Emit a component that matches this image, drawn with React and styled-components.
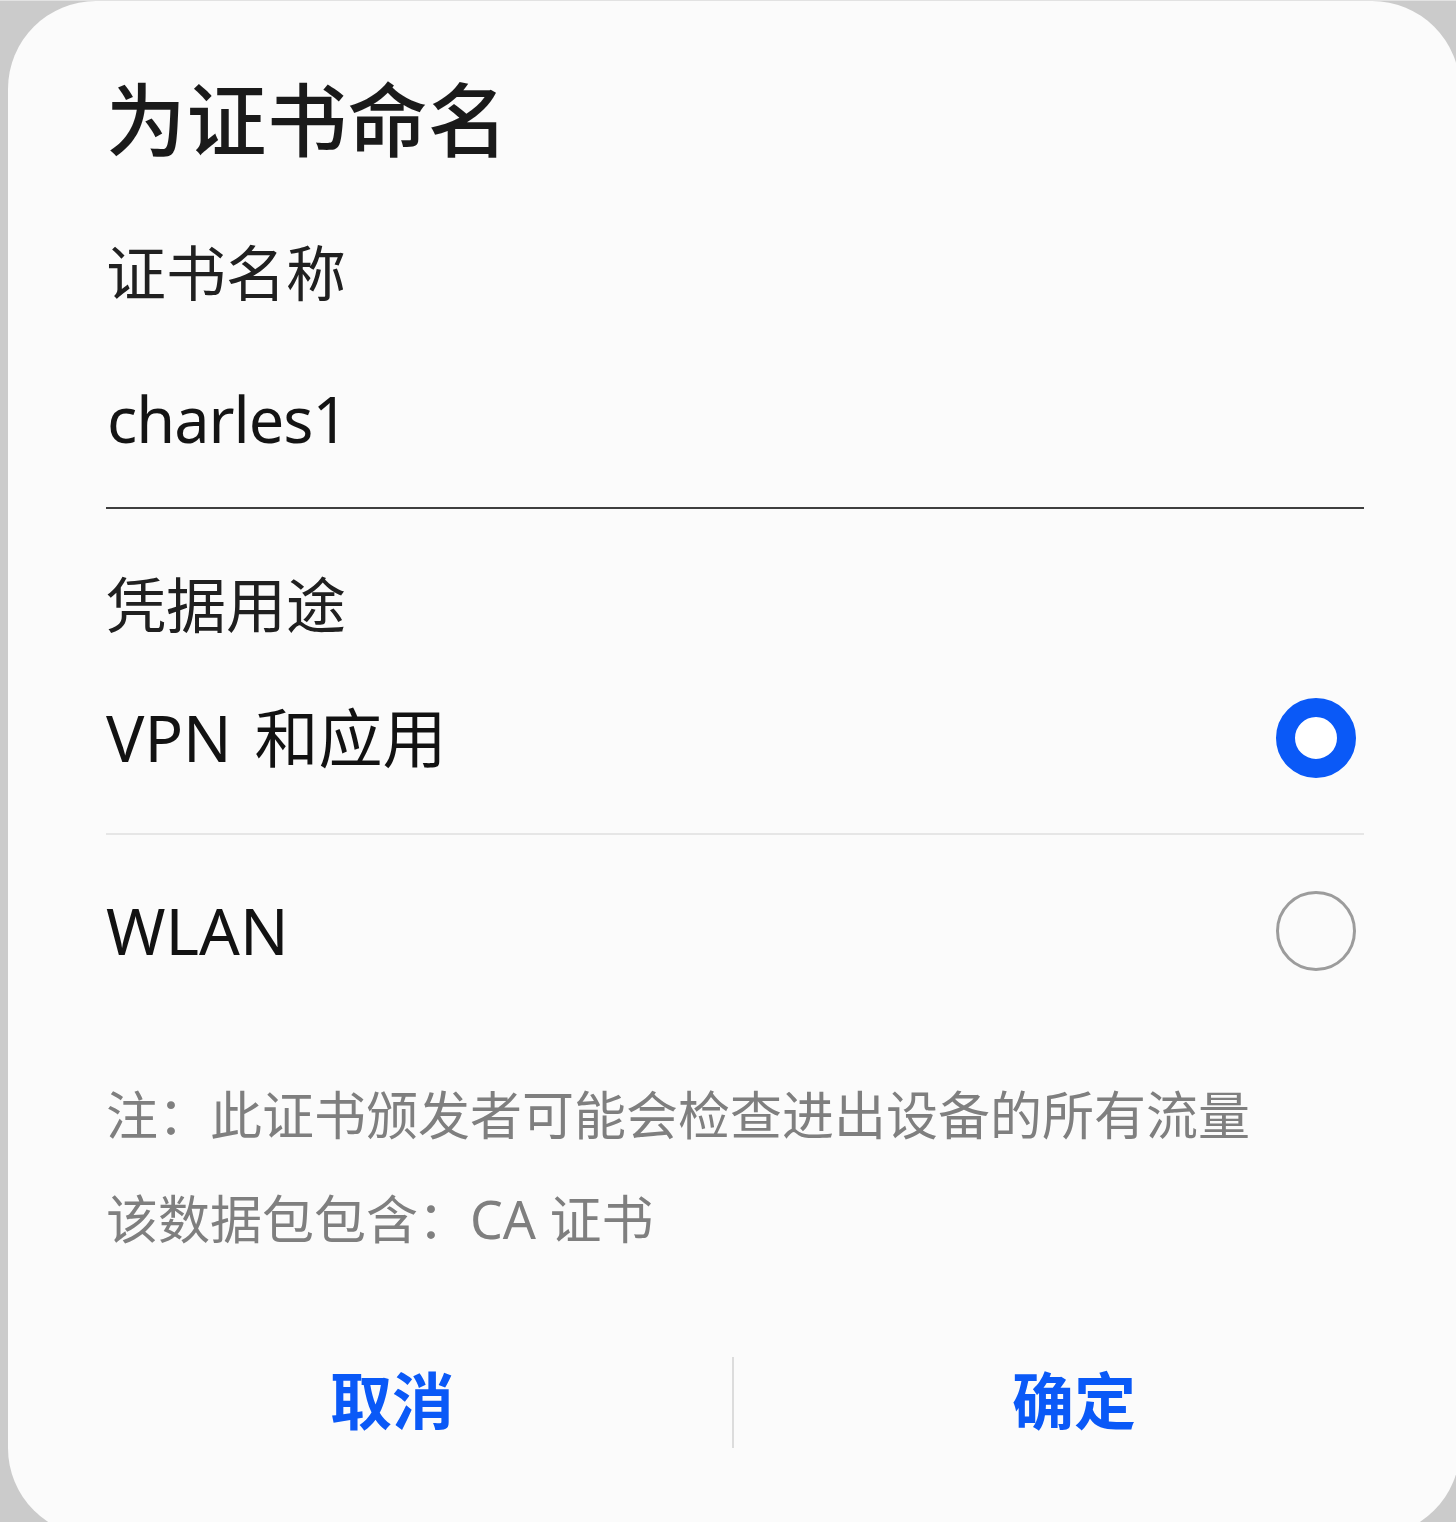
import styled, { createGlobalStyle } from "styled-components";

const GlobalStyle = createGlobalStyle`
  html, body {
    margin: 0;
    padding: 0;
  }
  body {
    background: linear-gradient(#e2e2e2 0 1px, #cbcbcb 1px);
    overflow: hidden;
    font-family: "Noto Sans", "Noto Sans CJK SC", sans-serif;
  }
`;

const Dialog = styled.div`
  margin: 1px 0 0 8px;
  width: 1452px;
  height: 1535px;
  border-radius: 88px;
  background: #fbfbfb;
  display: flex;
  flex-direction: column;
  box-sizing: border-box;
  padding-top: 74px;
`;

const Body = styled.div`
  padding: 0 96px 0 98px;
  display: flex;
  flex-direction: column;
`;

const Title = styled.h1`
  margin: 0;
  font-family: "Noto Sans CJK SC", sans-serif;
  font-size: 80px;
  font-weight: 500;
  line-height: 80px;
  color: #1a1a1a;
  letter-spacing: 0.5px;
`;

const Label = styled.div`
  margin-top: ${(p) => p.$top}px;
  font-family: "Noto Sans CJK SC", sans-serif;
  font-size: 60px;
  line-height: 80px;
  color: #202020;
`;

const Input = styled.div`
  padding: 69px 0 48px 1px;
  font-family: "Noto Sans", sans-serif;
  font-size: 63px;
  line-height: 80px;
  letter-spacing: -1px;
  color: #141414;
  border-bottom: 2px solid #3f3f3f;
`;

const Option = styled.div`
  height: ${(p) => p.$h}px;
  display: flex;
  align-items: center;
  justify-content: space-between;
  border-bottom: ${(p) => (p.$divider ? "2px solid #e6e6e6" : "none")};
`;

const OptionText = styled.span`
  font-family: "Noto Sans", "Noto Sans CJK SC", sans-serif;
  font-size: 64px;
  line-height: 80px;
  color: #121212;
  word-spacing: 6px;
`;

const Radio = styled.span`
  width: 80px;
  height: 80px;
  box-sizing: border-box;
  border-radius: 50%;
  margin-right: 8px;
  background: ${(p) => (p.$checked ? "#ffffff" : "transparent")};
  border: ${(p) => (p.$checked ? "19px solid #0a59f7" : "3px solid #9c9c9c")};
`;

const Note = styled.div`
  margin-top: 36px;
  font-family: "Noto Sans", "Noto Sans CJK SC", sans-serif;
  font-size: 52px;
  line-height: 104px;
  color: #7f7f7f;
`;

const Footer = styled.div`
  margin-top: 81px;
  padding: 0 46px 0 44px;
  height: 96px;
  display: flex;
  align-items: stretch;
`;

const Action = styled.button`
  flex: 1;
  border: none;
  background: none;
  padding: 0 0 4px;
  font-family: "Noto Sans CJK SC", sans-serif;
  font-size: 62px;
  font-weight: 700;
  color: #0a59f7;
  line-height: 92px;
  cursor: pointer;
`;

const Split = styled.span`
  width: 2px;
  background: #dcdcdc;
  margin-top: 5px;
`;

export default function App() {
  return (
    <>
      <GlobalStyle />
      <Dialog>
        <Body>
          <Title>为证书命名</Title>
          <Label $top={75}>证书名称</Label>
          <Input>charles1</Input>
          <Label $top={53}>凭据用途</Label>
          <Option $h={191} $divider>
            <OptionText>VPN 和应用</OptionText>
            <Radio $checked />
          </Option>
          <Option $h={192}>
            <OptionText>WLAN</OptionText>
            <Radio />
          </Option>
          <Note>
            注：此证书颁发者可能会检查进出设备的所有流量
            <br />
            该数据包包含：CA 证书
          </Note>
        </Body>
        <Footer>
          <Action>取消</Action>
          <Split />
          <Action>确定</Action>
        </Footer>
      </Dialog>
    </>
  );
}
